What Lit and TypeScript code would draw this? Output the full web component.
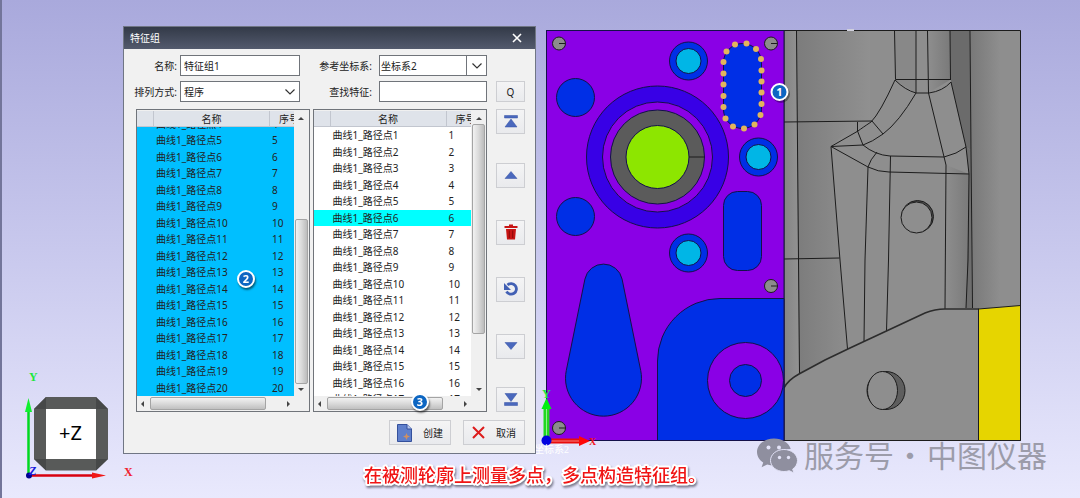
import { LitElement, html, svg, css } from "lit";
import { customElement, property } from "lit/decorators.js";
import { classMap } from "lit/directives/class-map.js";

const SMALL_HOLES = [[559, 43.5], [771, 43.5], [771, 286], [559, 428]];
const CYAN_HOLES = [[688.5, 61], [758.5, 157], [688.5, 253]];
const BLUE_HOLES = [[575.5, 97.5], [575.5, 216.5]];
const PROBE_POINTS = [
  [735, 44.5], [746.5, 43.5], [756, 49], [761, 59], [761.5, 70.5], [761.5, 81.5], [761.5, 92.5],
  [761.5, 104], [760.5, 115], [754.5, 124.5], [744, 128.5], [733, 126.5], [725.5, 118.5],
  [723.5, 107], [723.5, 96], [723.5, 84.5], [723.5, 73.5], [723.5, 62], [726.5, 51.5],
];

@customElement("part-scene")
class PartScene extends LitElement {
  static styles = css`
    :host { display: block; }
    svg { display: block; width: 100%; height: auto; }
    .edge { stroke: #1c1c1c; stroke-width: 1; fill: none; }
    .outlined { stroke: #14104a; stroke-width: 1; }
    .latin { font-family: "Liberation Serif", serif; font-weight: 700; font-size: 12px; }
    .face { font-family: "Noto Sans", sans-serif; font-size: 20px; }
    .frame-name { font-family: "Liberation Serif", "Noto Sans CJK SC", serif; font-size: 10px; }
    .caption {
      font-family: "Noto Sans CJK SC", sans-serif; font-size: 18px; font-weight: 500;
      fill: #f01414; stroke: #fff; stroke-width: 4px; stroke-linejoin: round; paint-order: stroke;
      filter: drop-shadow(1px 2px 1px #444455aa);
    }
    .watermark { font-family: "Noto Sans CJK SC", sans-serif; font-size: 30px; fill: #9c9caa; }
    .badge-text { font-family: "Noto Sans", sans-serif; font-size: 11px; font-weight: 700; fill: #fff; text-anchor: middle; }
  `;

  private plate() {
    return svg`
      <rect class="outlined" x="546.5" y="30.5" width="237.5" height="410" fill="#8a00e6"/>
      <path class="outlined" fill="#002fe6" d="M657.5 440.5V361A62.5 62.5 0 0 1 720 298.5H784V440.5Z"/>
      <circle class="outlined" cx="745.5" cy="380.5" r="38" fill="#8a00e6"/>
      <circle class="outlined" cx="745.5" cy="380.5" r="16" fill="#002fe6"/>
      <path class="outlined" fill="#002fe6" d="M584.9 279.2A19 19 0 0 1 622.1 279.2L640.7 370.4A38 38 0 1 1 566.3 370.4Z"/>
      <circle class="outlined" cx="657.5" cy="157" r="71" fill="#3800e6"/>
      <circle class="outlined" cx="657.5" cy="157" r="55" fill="#8a00e6"/>
      <circle class="outlined" cx="657.5" cy="157" r="47" fill="#5b5b5b"/>
      <circle class="outlined" cx="657.5" cy="157" r="31.5" fill="#8de600"/>
      <path class="edge" d="M689 157H704.5"/>
      ${BLUE_HOLES.map(([x, y]) => svg`<circle class="outlined" cx=${x} cy=${y} r="19" fill="#002fe6"/>`)}
      ${CYAN_HOLES.map(([x, y]) => svg`
        <circle class="outlined" cx=${x} cy=${y} r="19" fill="#002fe6"/>
        <circle class="outlined" cx=${x} cy=${y} r="12.5" fill="#00b6e6"/>`)}
      ${SMALL_HOLES.map(([x, y]) => svg`
        <circle class="edge" cx=${x} cy=${y} r="6.5" style="fill:#8c8c8c"/>
        <path class="edge" d=${`M${x} ${y}h6.5`}/>`)}
      <rect class="outlined" x="723.5" y="43.5" width="38" height="85" rx="19" fill="#002fe6"/>
      <rect class="outlined" x="723.5" y="191.5" width="38" height="79" rx="14" fill="#002fe6"/>
      ${PROBE_POINTS.map(([x, y]) => svg`<circle cx=${x} cy=${y} r="3" fill="#e2b55c"/>`)}
    `;
  }

  private casting() {
    return svg`
      <rect x="784" y="30.5" width="237" height="410" fill="#8e8e8e"/>
      <rect x="784" y="31" width="15" height="360" fill="url(#shadeA)"/>
      <path d="M797 31H870V121H797Z" fill="url(#shadeB)"/>
      <path d="M797 121H857L831 147L847 350L799 374Z" fill="url(#shadeB)"/>
      <path d="M895 31H916V93L895 80Z" fill="#888888"/>
      <path d="M928 31H950V80L928 93Z" fill="url(#shadeC)"/>
      <path d="M950 31H970L971 150L966 147L951 82Z" fill="#6b6b6b"/>
      <path d="M946 165L969 174L966 308H945Z" fill="url(#shadeC)"/>
      <path d="M966 147L971 150L972 308H966L969 174Z" fill="#6e6e6e"/>
      <path d="M970.5 31H1000V308H972Z" fill="url(#shadeD)"/>
      <path class="edge" d="M796.5 31L798.5 260L799.5 374M784 122L872 121M894.5 31L895.5 79.5H951
        M916 31V93M927.5 31L928.5 93M950 31L950.5 80M970 31L971 150L972.5 308
        M895 80Q905 90 916 93H929Q943 91 951 82
        M895 80Q880 113 871 122Q862 128 858 131L831 146.5
        M916 93Q899 122 883 134Q872 142 863 145L831 146.5
        M857.5 122V131L863 145M872 121L883 134
        M863 145Q875 155 890 156L944 157Q957 154 966 147
        M831 146.5L868 167Q878 172 889 172L969 174
        M877 152Q870 160 868 167L865 260L864 341M890.5 156L888.5 260L886.5 331
        M928.5 93L946 165L945 309M951 82L966 147L969 174L968 260L966 308
        M831 146.5L840 260L847.5 349M784 259L839.5 258"/>
      <path fill="#8e8e8e" d="M784 388Q788 380 799 374L825 360L850 348L925 313Q935 309 945 309H979V440.5H784Z"/>
      <path class="edge" style="stroke-width:1.6;stroke:#2c2c2c" d="M784 388Q788 380 799 374L825 360L850 348L925 313Q935 309 945 309H979"/>
      <path class="edge" style="fill:#e6d500" d="M978.5 309L1020.5 305.5V440.5H978.5Z"/>
      <circle class="edge" cx="917.5" cy="216.5" r="16" style="fill:#4c4c4c"/>
      <circle class="edge" cx="916.5" cy="217.5" r="15.5" style="fill:#8e8e8e"/>
      <circle class="edge" cx="886" cy="390.5" r="19" style="fill:#5e5e5e"/>
      <ellipse class="edge" cx="882.5" cy="390.5" rx="15" ry="19" style="fill:#8e8e8e"/>
      <path class="edge" d="M784 30.5H1020.5V440.5H784Z"/>
      <rect x="847" y="29" width="7" height="2" fill="#d0d0dc"/>
    `;
  }

  private axes() {
    return svg`
      <path d="M46 397H96L108 409V459L96 470.5H46L34 459V409Z" fill="#585a59"/>
      <path d="M46 397V409H34ZM96 397V409H108ZM46 470.5V459H34ZM96 470.5V459H108Z" fill="#464848"/>
      <rect x="46" y="409" width="50" height="50" fill="#fff"/>
      <text class="face" x="59" y="440">+Z</text>
      <path d="M28.5 475V406" stroke="#00d820" stroke-width="2.5"/>
      <path d="M28.5 398L32 412H25Z" fill="#10f030"/>
      <path d="M29 475.5H94" stroke="#d80010" stroke-width="2.5"/>
      <path d="M106 475.5L92 472.5V478.5Z" fill="#f01818"/>
      <circle cx="29" cy="475.5" r="3" fill="#000090"/>
      <text class="latin" x="29" y="381" fill="#20e840">Y</text>
      <text class="latin" x="124" y="476" fill="#f02030">X</text>
      <text class="latin" x="29" y="475" fill="#1818e0" font-style="italic">Z</text>

      <text class="latin" x="542" y="398" fill="#20e840">Y</text>
      <text class="latin" x="589" y="445" fill="#f01018" style="font-size:10px">X</text>
      <path d="M546.5 440V408" stroke="#20d820" stroke-width="6"/>
      <path d="M546.5 408V440" stroke="#90f090" stroke-width="1"/>
      <path d="M546.5 398L551.5 409H541.5Z" fill="#00f010"/>
      <path d="M547 441H580" stroke="#e80c0c" stroke-width="5"/>
      <path d="M550 441H580" stroke="#f88080" stroke-width="1"/>
      <path d="M590 441L579 436V446Z" fill="#ff0808"/>
      <circle cx="546.5" cy="440.5" r="5" fill="#0000e0"/>
      <text class="frame-name" x="534" y="453" fill="#fff">坐标系2</text>
    `;
  }

  render() {
    return html`
      <svg viewBox="0 0 1080 498" role="img" aria-label="三维测量视图">
        <defs>
          <linearGradient id="shadeA"><stop offset="0" stop-color="#858585"/><stop offset="1" stop-color="#929292"/></linearGradient>
          <linearGradient id="shadeB"><stop offset="0" stop-color="#7c7c7c"/><stop offset="1" stop-color="#909090"/></linearGradient>
          <linearGradient id="shadeC"><stop offset="0" stop-color="#8e8e8e"/><stop offset="1" stop-color="#7a7a7a"/></linearGradient>
          <linearGradient id="shadeD"><stop offset="0" stop-color="#787878"/><stop offset="1" stop-color="#8e8e8e"/></linearGradient>
        </defs>
        ${this.casting()}
        ${this.plate()}
        ${this.axes()}
        <g fill="#8f8f9f">
          <path d="M774 438.500c-9.500 0-17 6-17 13.500 0 4.200 2.400 8 6.200 10.500l-1.600 4.800 5.600-2.900c2.100.6 4.400 1 6.800 1 .5 0 1 0 1.500-.1-.4-1.200-.5-2.400-.5-3.600 0-7.200 7-12.700 15.700-12.700-1.600-6-8.400-10.500-16.700-10.500z"/>
          <path d="M797.500 460.500c0-6.200-6.200-11-13.600-11s-13.400 4.900-13.400 11 6 11 13.400 11c1.900 0 3.700-.3 5.400-.8l4.600 2.300-1.200-3.900c3-2 4.800-5.100 4.800-8.600z" stroke="#e3e3f8" stroke-width="1"/>
        </g>
        <g fill="#e3e3f8">
          <circle cx="768.500" cy="447.500" r="2"/><circle cx="779" cy="447.500" r="2"/>
          <circle cx="779.500" cy="457.500" r="1.700"/><circle cx="788.500" cy="457.500" r="1.700"/>
        </g>
        <text class="watermark" x="804" y="467">服务号</text>
        <text class="watermark" x="910" y="467" text-anchor="middle">·</text>
        <text class="watermark" x="927" y="467">中图仪器</text>
        <text class="caption" x="364" y="482">在被测轮廓上测量多点，多点构造特征组。</text>
        <circle cx="781" cy="94" r="9" fill="#00000055"/>
        <circle cx="779.500" cy="92" r="8" fill="#0d66c2" stroke="#fff" stroke-width="2"/>
        <text class="badge-text" x="779.500" y="96">1</text>
      </svg>`;
  }
}

@customElement("feature-list")
class FeatureList extends LitElement {
  @property({ type: Number }) selected = 0;
  @property({ type: Boolean, attribute: "all-selected" }) allSelected = false;
  @property({ type: Boolean, attribute: "at-end" }) atEnd = false;

  static styles = css`
    :host {
      display: grid;
      grid-template: minmax(0, 1fr) 15px / minmax(0, 1fr) 15px;
      min-height: 0;
      border: 1px solid #70747a;
      background: #f0f0f0;
      box-sizing: border-box;
      padding-top: 1px;
    }
    .view { overflow: auto; min-height: 0; scrollbar-width: none; background: #fff; }
    table { border-collapse: separate; border-spacing: 0; table-layout: fixed; width: 172px; height: 346px; }
    th, td { padding: 0; font-weight: 400; line-height: 12px; text-align: left; white-space: nowrap; }
    th {
      position: sticky; top: 0; height: 15px; text-align: center; background: #dfe3ea;
      border-right: 1px solid #c2c6cf; border-bottom: 1px solid #c2c6cf;
    }
    td { padding-left: 2px; }
    th.mark { width: 16px; }
    th.name { width: 115px; }
    .picked td { background: #00ffff; }
    .all td { background: #00bfff; }
    .vbar { display: flex; flex-direction: column; align-items: center; padding: 6px 0 5px; }
    .hbar { display: flex; align-items: center; padding: 0 4px; }
    .vtrack { flex: 1; align-self: stretch; display: flex; flex-direction: column; margin: 4px 1px 10px; }
    .htrack { flex: 1; align-self: stretch; display: flex; margin: 1px 18px 1px 6px; }
    .thumb-v { box-sizing: border-box; height: 210px; border: 1px solid #a4a4a4; border-radius: 2px; background: linear-gradient(90deg, #f2f2f2, #dadada 50%, #bcbcbc); }
    .atend .vtrack { justify-content: flex-end; margin-bottom: 4px; }
    .atend .thumb-v { height: 165px; }
    .thumb-h { width: 116px; box-sizing: border-box; border: 1px solid #a4a4a4; border-radius: 2px; background: linear-gradient(#f2f2f2, #dadada 50%, #c0c0c0); }
    svg { display: block; fill: #444; }
    .wrap { display: contents; }
  `;

  firstUpdated() {
    if (this.atEnd) {
      const view = this.renderRoot.querySelector(".view") as HTMLElement;
      view.scrollTop = view.scrollHeight;
    }
  }

  render() {
    const rows = Array.from({ length: 20 }, (_, i) => i + 1);
    return html`
      <div class=${classMap({ wrap: true, atend: this.atEnd })}>
        <div class="view">
          <table>
            <thead><tr><th class="mark"></th><th class="name">名称</th><th>序号</th></tr></thead>
            <tbody class=${classMap({ all: this.allSelected })}>
              ${rows.map((n) => html`<tr class=${classMap({ picked: n === this.selected })}>
                <td></td><td>曲线1_路径点${n}</td><td>${n}</td></tr>`)}
            </tbody>
          </table>
        </div>
        <div class="vbar">
          <svg width="6" height="3"><path d="M0 3L3 0L6 3Z"/></svg>
          <div class="vtrack"><div class="thumb-v"></div></div>
          <svg width="6" height="3"><path d="M0 0L3 3L6 0Z"/></svg>
        </div>
        <div class="hbar">
          <svg width="3" height="6"><path d="M3 0L0 3L3 6Z"/></svg>
          <div class="htrack"><div class="thumb-h"></div></div>
          <svg width="3" height="6"><path d="M0 0L3 3L0 6Z"/></svg>
        </div>
      </div>`;
  }
}

@customElement("app-root")
class AppRoot extends LitElement {
  static styles = css`
    :host {
      display: block; position: relative; box-sizing: border-box; min-height: 100vh; overflow: hidden;
      background: linear-gradient(90deg, #73759a 2px, transparent 2px), linear-gradient(#a9a9dc, #c8c8ed 50%, #e9e9fd);
      font: 10px/14px "Noto Sans", "Noto Sans CJK SC", sans-serif; color: #222;
    }
    .dialog {
      position: absolute; left: 123px; top: 26px; box-sizing: border-box; width: 413px;
      border: 1px solid #707684; background: #f1f1f1;
    }
    .title {
      display: flex; align-items: center; justify-content: space-between; height: 22px;
      padding: 0 13px 0 6px; color: #fff; background: linear-gradient(#333a48, #535a6d);
    }
    h1 { margin: 0; font-size: 10px; font-weight: 400; }
    button {
      display: flex; align-items: center; justify-content: center; box-sizing: border-box; margin: 0; padding: 0;
      font: inherit; color: inherit; border: 1px solid #cdced2; background: linear-gradient(#f4f4f5, #e9eaed);
    }
    .close { border: 0; background: none; }
    .body { padding: 6px 10px 8px 12px; }
    .form { display: grid; grid-template-columns: 44px 120px 79px 1fr 38px; grid-auto-rows: 21px; row-gap: 5px; align-items: stretch; }
    label { display: flex; align-items: center; justify-content: flex-end; white-space: nowrap; padding-right: 3px; }
    label.wide { padding-right: 7px; }
    input, select {
      appearance: none; box-sizing: border-box; width: 100%; min-width: 0; height: 21px; margin: 0; padding: 0 3px;
      font: inherit; color: inherit; border: 1px solid #70747a; border-radius: 0; background: #fff;
    }
    .combo { display: grid; grid-template-columns: 1fr 21px; }
    .combo select { grid-area: 1 / 1 / 2 / 3; }
    .combo svg { grid-area: 1 / 2; place-self: center; pointer-events: none; z-index: 1; }
    .split { grid-area: 1 / 2; border-left: 1px solid #70747a; z-index: 1; pointer-events: none; }
    .combo.tight select { padding: 0 1px; }
    .search { margin-left: 9px; }
    .lists { display: grid; grid-template: minmax(0, 1fr) / 1fr 1fr 38px; margin-top: 7px; height: 303px; }
    .lists feature-list:first-child { margin-right: 2px; }
    .lists feature-list + feature-list { margin-left: 1px; }
    .tools { display: flex; flex-direction: column; justify-content: space-between; margin-left: 9px; }
    .moves { display: flex; flex-direction: column; gap: 32px; }
    .tools button { height: 25px; }
    .actions { display: flex; justify-content: flex-end; gap: 12px; margin-top: 8px; }
    .actions button { width: 62px; height: 25px; gap: 11px; }
    .blue { fill: #4a68bd; stroke: #3450a4; stroke-width: 0.5; }
    .badge {
      position: absolute; box-sizing: border-box; width: 18px; height: 18px; border: 2px solid #fff; border-radius: 50%;
      background: #0d66c2; color: #fff; font-size: 11px; font-weight: 700; line-height: 14px; text-align: center;
      box-shadow: 1px 2px 2px #00000080;
    }
    .two { left: 113px; top: 243px; }
    .three { left: 287px; top: 366px; }
  `;

  private chevron() {
    return html`<svg width="10" height="6" fill="none" stroke="#333" stroke-width="1.200"><path d="M.5.5L5 5L9.500.5"/></svg>`;
  }

  render() {
    return html`
      <part-scene></part-scene>
      <section class="dialog" role="dialog" aria-labelledby="title">
        <header class="title">
          <h1 id="title">特征组</h1>
          <button class="close" aria-label="关闭">
            <svg width="10" height="10" stroke="#fff" stroke-width="1.600"><path d="M1 1L9 9M9 1L1 9"/></svg>
          </button>
        </header>
        <div class="body">
          <div class="form">
            <label for="name">名称:</label>
            <input id="name" value="特征组1">
            <label class="wide" for="frame">参考坐标系:</label>
            <div class="combo tight"><select id="frame"><option>坐标系2</option></select><span class="split"></span>${this.chevron()}</div>
            <span></span>
            <label for="order">排列方式:</label>
            <div class="combo"><select id="order"><option>程序</option></select>${this.chevron()}</div>
            <label class="wide" for="find">查找特征:</label>
            <input id="find">
            <button class="search" aria-label="查找">Q</button>
          </div>
          <div class="lists">
            <feature-list all-selected at-end></feature-list>
            <feature-list .selected=${6}></feature-list>
            <div class="tools">
              <button aria-label="置顶"><svg class="blue" width="14" height="13"><path d="M.5.5H13.500V3H.5ZM7 4L13 12H1Z"/></svg></button>
              <div class="moves">
                <button aria-label="上移"><svg class="blue" width="14" height="8"><path d="M7 .5L13 7.500H1Z"/></svg></button>
                <button aria-label="删除"><svg width="14" height="16" fill="#c81414"><path d="M5 .5H9V2H13.500V4H.5V2H5ZM2 5H12L11 15.500H3Z"/><path d="M5.300 6.500V14M8.700 6.500V14" stroke="#8c0808"/></svg></button>
                <button aria-label="撤销"><svg width="16" height="16"><path d="M4.500 4A5.300 5.300 0 1 1 3.500 10.500" fill="none" stroke="#4260b4" stroke-width="2.800"/><path d="M1 2V9H8Z" fill="#4260b4"/></svg></button>
                <button aria-label="下移"><svg class="blue" width="14" height="8"><path d="M1 .5H13L7 7.500Z"/></svg></button>
              </div>
              <button aria-label="置底"><svg class="blue" width="14" height="13"><path d="M1 .5H13L7 8.500ZM.5 9.500H13.500V12.500H.5Z"/></svg></button>
            </div>
          </div>
          <div class="actions">
            <button><svg width="15" height="18"><path d="M.5.5H10L14.500 5V17.500H.5Z" fill="#5f7fcb" stroke="#34509c"/><path d="M10 .5V5H14.500" fill="#b8c8ee" stroke="#34509c"/><path d="M9.500 9L10.500 11.500L13 12.500L10.500 13.500L9.500 16L8.500 13.500L6 12.500L8.500 11.500Z" fill="#d09060"/></svg>创建</button>
            <button><svg width="13" height="13" stroke="#dd1c1c" stroke-width="2"><path d="M1 1L12 12M12 1L1 12"/></svg>取消</button>
          </div>
        </div>
        <span class="badge two">2</span>
        <span class="badge three">3</span>
      </section>`;
  }
}
